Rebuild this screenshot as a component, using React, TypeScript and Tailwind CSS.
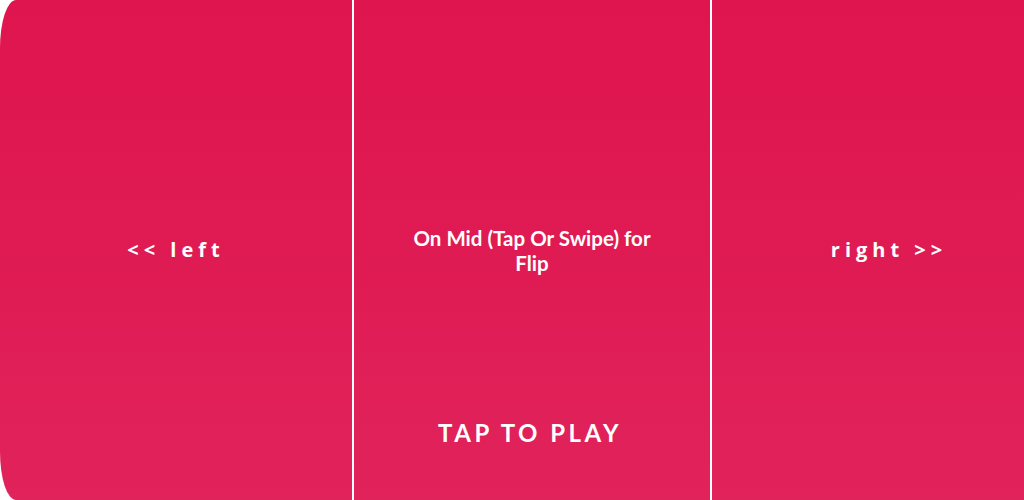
export default function App() {
  return (
    <div className="w-[1024px] h-[500px] bg-white overflow-hidden">
      <div
        className="w-full h-full flex rounded-l-[16px_48px] bg-[linear-gradient(to_bottom,#DF1550_0%,#DF1750_20%,#E01C55_60%,#E1235B_100%)] text-white font-bold"
        style={{ fontFamily: '"Open Sans", "Liberation Sans", sans-serif' }}
      >
        <div className="w-[352px] h-full flex items-center justify-center">
          <span className="text-[20px] tracking-[5px]">&lt;&lt; left</span>
        </div>
        <div className="w-[2px] h-full bg-white" />
        <div
          className="w-[356px] h-full flex flex-col items-center"
          style={{ fontFamily: 'Lato, "Open Sans", sans-serif' }}
        >
          <div className="pt-[226px] w-[250px] text-center text-[20.5px] leading-[25px]">
            On Mid (Tap Or Swipe) for Flip
          </div>
          <div className="mt-auto mb-[49px] pr-[4px] text-[24px] tracking-[3.5px]">TAP TO PLAY</div>
        </div>
        <div className="w-[2px] h-full bg-white" />
        <div className="flex-1 h-full flex items-center justify-center pl-[42px]">
          <span className="text-[20px] tracking-[5px]">right &gt;&gt;</span>
        </div>
      </div>
    </div>
  );
}
